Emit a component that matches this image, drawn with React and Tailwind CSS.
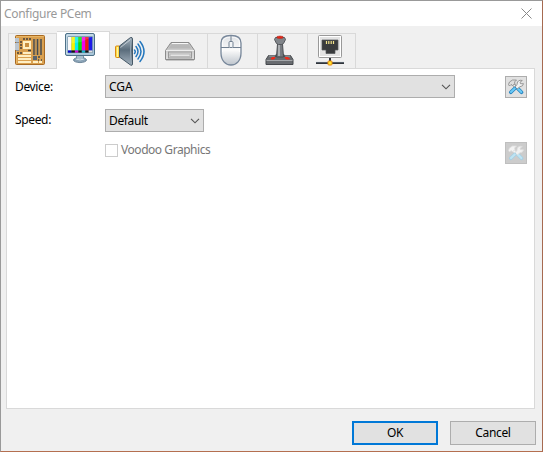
import React from 'react';

const Svg = ({ box = '0 0 32 32', className = 'w-8 h-8', children }) => (
  <svg viewBox={box} className={'block shrink-0 ' + className} fill="none">{children}</svg>
);

const Board = () => (
  <Svg>
    <rect x="1.500" y="1.500" width="29" height="29" rx="1" fill="#d9a050" stroke="#a96a22" />
    <path d="M2.500 29.500V2.500H29.500" stroke="#e9b766" />
    <rect x="1" y="4" width="4" height="4" fill="#b8c4cf" />
    <rect x="1" y="9" width="4" height="7" fill="#bcc5cd" />
    <path d="M2 8.500h3M2 16.500h3" stroke="#8b8f92" />
    <rect x="9" y="7" width="8" height="8" fill="#fff0c2" />
    <rect x="11" y="9" width="4" height="4" fill="#c98f40" />
    <path d="M20 5v16M23.500 5v16M27 5v16" stroke="#454b50" strokeWidth="1.500" />
    <path d="M21.300 5v16M24.800 5v16" stroke="#a0855c" strokeWidth=".7" />
    <path d="M9 5h2M12 5h2M15 5h2M6 8h2M6 11h2M6 14h2M3 19h2M6 19h2M14 16.500h3" stroke="#443f3a" strokeWidth="1.700" />
    <path d="M9 19h8M4 22h13M4 25h13M4 28h13" stroke="#ffefc4" strokeWidth="1.800" />
    <rect x="19" y="22" width="4" height="4" fill="#59636d" />
    <path d="M24 23h2M24 26h1M27 26h1" stroke="#3d4650" strokeWidth="1.500" />
    <path d="M19 28h5M25 28h3" stroke="#ffefc4" strokeWidth="1.800" />
  </Svg>
);

const BARS = ['#f8f8f8', '#f4f400', '#08eded', '#08e408', '#f300ee', '#f21414', '#1c1ce8'];
const LOW = ['#0000d8', '#111111', '#d800d8', '#101010', '#10b8c8', '#101010', '#e0e0e0'];

const Monitor = () => (
  <Svg>
    <ellipse cx="16" cy="28" rx="6.500" ry="2.600" fill="#8ba4b7" stroke="#59758b" strokeWidth=".8" />
    <path d="M12.500 23h7v4q-3.500 2-7 0z" fill="#a9bfce" stroke="#617e94" strokeWidth=".8" />
    <rect x="1.500" y="1.500" width="29" height="22" rx="1.500" fill="#a9c6d9" stroke="#4e7188" />
    <path d="M3 22V3h26" stroke="#dceaf2" />
    <rect x="3.500" y="4.500" width="25" height="16.500" fill="#5d7d92" />
    {BARS.map((c, i) => <rect key={c} x={4 + i * 3.45} y="5" width="3.5" height="13.500" fill={c} />)}
    {LOW.map((c, i) => <rect key={i} x={4 + i * 3.45} y="18.500" width="3.5" height="2" fill={c} />)}
    <path d="M4 5h24L17 10 4 12z" fill="#fff" opacity=".15" />
    <path d="M12 27q4 2 8 0" stroke="#d9e7ef" />
  </Svg>
);

const Speaker = () => (
  <Svg>
    <defs>
      <linearGradient id="cone" x1="0" y1="0" x2="0" y2="1">
        <stop stopColor="#a7b5c0" /><stop offset=".45" stopColor="#5b6d7c" /><stop offset="1" stopColor="#a5b3bf" />
      </linearGradient>
    </defs>
    <rect x="2.500" y="11" width="4.500" height="11.500" rx="1" fill="#ffdb45" stroke="#d98a16" />
    <path d="M4.500 12v10" stroke="#fff4a0" />
    <path d="M6.500 11L17.500 2.500q2-.500 2 1.500v25q0 2-2 1L6.500 22z" fill="url(#cone)" stroke="#465967" />
    <path d="M17.500 4v25" stroke="#8fa2b0" />
    <path d="M7.500 12.500l10-8" stroke="#dbe3e8" opacity=".7" />
    <path d="M21.500 15q1.500 1.500 0 3.500M23 11.500q4 5 0 10M25 9q6 7.500 0 15M27 6.500q8 10 0 20" stroke="#2477bd" strokeWidth="1.500" strokeLinecap="round" />
  </Svg>
);

const Drive = () => (
  <Svg>
    <defs><linearGradient id="drive" x1="0" y1="0" x2="0" y2="1"><stop stopColor="#bbb" /><stop offset="1" stopColor="#e0e0e0" /></linearGradient></defs>
    <path d="M7 8.500h18l5.500 8v9h-29v-9z" fill="url(#drive)" stroke="#8b8b8b" />
    <path d="M8 9.500h16M6 13.500h20" stroke="#f6f6f6" />
    <path d="M7.500 10.500h17l3 4h-23z" fill="#b8b8b8" />
    <path d="M2 16.500h28" stroke="#eee" />
    <rect x="4.500" y="18" width="23" height="6" fill="#d5d5d5" stroke="#999" />
    <rect x="6" y="20" width="20" height="2.500" fill="#e4e4e4" stroke="#aaa" strokeWidth=".7" />
    <path d="M2 26.500h28" stroke="#aaa" opacity=".6" />
  </Svg>
);

const Mouse = () => (
  <Svg>
    <defs><linearGradient id="mouse" x1="0" y1="0" x2="0" y2="1"><stop stopColor="#dfe2e6" /><stop offset=".5" stopColor="#fafafa" /><stop offset="1" stopColor="#bdc4cc" /></linearGradient></defs>
    <path d="M16 1.500C9 1.500 6 4 6 9v10c0 7.500 4.500 12 10 12s10-4.500 10-12V9c0-5-3-7.500-10-7.500z" fill="url(#mouse)" stroke="#77879a" strokeWidth="1.300" />
    <path d="M7.500 18V9q0-6 8.500-6t8.500 6v9" stroke="#fff" opacity=".8" />
    <path d="M6 13.500h8m4 0h8M16 2v5" stroke="#718091" strokeWidth="1" />
    <rect x="14" y="7.500" width="4" height="6" rx="1" fill="#f3f5f7" stroke="#718091" />
  </Svg>
);

const Joystick = () => (
  <Svg>
    <path d="M4.500 21.500h22l2.500 4v5H2v-5z" fill="#696c70" stroke="#45484c" />
    <path d="M5 22h21M2.500 26.500h26" stroke="#a4a7aa" />
    <path d="M12 20h8l1.500 3h-11z" fill="#505357" />
    <path d="M13.500 10h5l1 13h-7z" fill="#777b80" stroke="#4b4e52" />
    <path d="M15 10v12" stroke="#bfc2c5" strokeWidth="1.500" />
    <path d="M10.500 5.500l1-2h9l1 2-2 4-2 1h-3l-2-1z" fill="#81858a" stroke="#55585c" />
    <path d="M13 4V2.500q3-1 6 0V4q-3 1-6 0z" fill="#ef2414" stroke="#a93026" strokeWidth=".6" />
    <path d="M7 25l1-1.500h3l-1 1.500zM21 23.500h3l1.500 1.500h-3.500z" fill="#ff2510" stroke="#ef2a1a" />
  </Svg>
);

const Network = () => (
  <Svg>
    <rect x="4.500" y="1.500" width="23" height="22" rx="1" fill="#e3e3e3" stroke="#999" />
    <rect x="5.500" y="2.500" width="21" height="20" stroke="#fff" />
    <path d="M8 6h16v10h-3v3.500H12V16H8z" fill="#393b3d" stroke="#55585a" strokeWidth=".7" />
    <path d="M12.500 7v3m2.300-3v3m2.400-3v3m2.300-3v3" stroke="#efe28b" strokeWidth="1.200" />
    <path d="M16 24v4M2 29h28" stroke="#30343a" strokeWidth="2" />
    <path d="M2 28.400h28" stroke="#75818d" strokeWidth=".6" />
    <rect x="14" y="27" width="4" height="4" rx=".8" fill="#ffe52d" stroke="#e58510" />
  </Svg>
);

const Tools = ({ disabled }) => {
  const edge = disabled ? '#dedede' : '#858585';
  const blue = disabled ? '#a6cfe3' : '#2482bf';
  const light = disabled ? '#bfe4f3' : '#6bcaf6';
  return (
    <div className={'flex h-[22px] w-[22px] items-center justify-center border ' + (disabled ? 'border-[#bfbfbf] bg-[#cccccc]' : 'border-[#adadad] bg-[#e1e1e1]')}>
      <Svg box="0 0 16 16" className="h-4 w-4">
        <path d="M4 3.500l5 6" stroke={edge} strokeWidth="2.800" />
        <path d="M4 4l5 5.500" stroke="#f4f4f4" strokeWidth="1.300" />
        <path d="M.500 5.500L1.500 3l3-2h4L6.500 3l.5 1.500L4.500 6.500 3 5.500 1.500 7z" fill={disabled ? '#f4f4f4' : '#dedede'} stroke={edge} strokeWidth=".8" />
        <path d="M9.300 9l4.200 4.300" stroke={blue} strokeWidth="3.600" strokeLinecap="round" />
        <path d="M9.300 9l4 4" stroke={light} strokeWidth="2.200" strokeLinecap="round" />
        <path d="M9 5.500q-.3-3.500 3-4.300l2.300.3-2.300 1.700.5 1.500h3q-.5 2.800-3.500 3L9 10 7 8z" fill="#f1f1f1" stroke={edge} strokeWidth=".8" />
        <path d="M6.700 9.500L2.800 13.300" stroke={blue} strokeWidth="3.600" strokeLinecap="round" />
        <path d="M6.700 9.500L3 13" stroke={light} strokeWidth="2.200" strokeLinecap="round" />
      </Svg>
    </div>
  );
};

const Chevron = () => (
  <Svg box="0 0 10 6" className="h-[6px] w-[10px]"><path d="M1 .8l4 4 4-4" stroke="#555" strokeWidth="1.150" /></Svg>
);

const Select = ({ children, className }) => (
  <div className={'flex h-[23px] items-center justify-between border border-[#adadad] bg-[#e1e1e1] pl-[3px] pr-[3px] ' + className}>
    <span>{children}</span><Chevron />
  </div>
);

const Tab = ({ children, className }) => (
  <div className={'flex h-[35px] justify-center border-t border-r border-[#d9d9d9] bg-[#f0f0f0] ' + className}>{children}</div>
);

export default function App() {
  return (
    <div className="flex h-[452px] w-[543px] flex-col overflow-hidden border border-t-[#999] border-r-[#a66a50] border-b-[#b46f50] border-l-[#999] bg-[#f0f0f0] font-['Noto_Sans','Open_Sans',sans-serif] text-[12px] leading-4 tracking-[-0.35px] text-black">
      <header className="flex h-[25px] shrink-0 items-center justify-between bg-white pr-[10px] pl-[3px] text-[#999]">
        <span className="tracking-[-0.3px]">Configure PCem</span>
        <Svg box="0 0 11 11" className="h-[11px] w-[11px]"><path d="M.5.5l10 10M10.500.5l-10 10" stroke="#888" /></Svg>
      </header>
      <nav className="flex h-[42px] shrink-0 items-end pl-[7px]">
        <Tab className="w-[49px] border-l pr-[6px]"><Board /></Tab>
        <div className="z-10 -mb-px flex h-[38px] w-[53px] justify-center border-t border-r border-[#d9d9d9] bg-white pr-[6px]"><Monitor /></div>
        <Tab className="w-[48px] pt-px pr-[9px]"><Speaker /></Tab>
        <Tab className="w-[50px] pr-[5px]"><Drive /></Tab>
        <Tab className="w-[50px] pr-[4px]"><Mouse /></Tab>
        <Tab className="w-[50px] pr-[5px]"><Joystick /></Tab>
        <Tab className="w-[48px] pr-[3px]"><Network /></Tab>
      </nav>
      <main className="mx-[5px] mr-[7px] h-[341px] shrink-0 border border-[#d9d9d9] bg-white pt-[6px] pr-[7px] pl-[8px]">
        <div className="flex h-[23px] items-center">
          <span className="w-[90px]">Device:</span>
          <Select className="w-[350px] tracking-normal">CGA</Select>
          <div className="ml-auto"><Tools /></div>
        </div>
        <div className="mt-[11px] flex h-[23px] items-center">
          <span className="w-[90px] pb-[2px]">Speed:</span>
          <Select className="w-[99px]">Default</Select>
        </div>
        <div className="mt-[10px] flex h-[23px] items-start justify-between pl-[90px] text-[#777]">
          <div className="flex items-center gap-[3px] tracking-[-0.45px]"><span className="h-[13px] w-[13px] border border-[#ccc]" />Voodoo Graphics</div>
          <Tools disabled />
        </div>
      </main>
      <footer className="mt-3 mr-[6px] flex h-6 justify-end gap-3">
        <button className="h-6 w-[86px] border-2 border-[#0078d7] bg-[#e1e1e1]">OK</button>
        <button className="h-6 w-[86px] border border-[#adadad] bg-[#e1e1e1]">Cancel</button>
      </footer>
    </div>
  );
}
